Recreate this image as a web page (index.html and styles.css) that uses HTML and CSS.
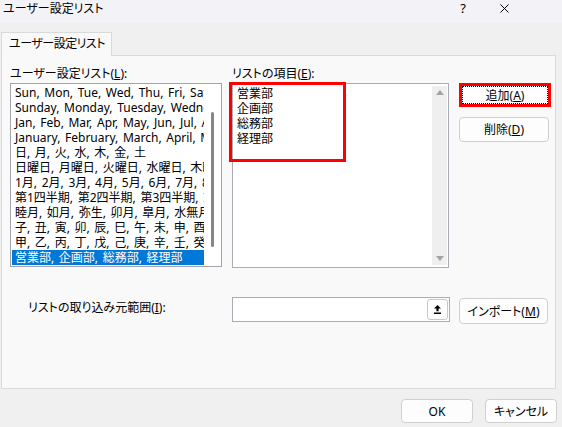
FILE: index.html
```html
<!DOCTYPE html>
<html lang="ja">
<head>
<meta charset="utf-8">
<title>ユーザー設定リスト</title>
<link rel="stylesheet" href="styles.css">
</head>
<body>
<div class="titlebar">
  <span class="title">ユーザー設定リスト</span>
  <span class="help">?</span>
  <svg class="close" viewBox="0 0 9 9" width="9" height="9"><path d="M0.5 0.5 L8.5 8.5 M8.5 0.5 L0.5 8.5" stroke="#000" stroke-width="1" fill="none"/></svg>
</div>
<div class="tabs"><div class="tab">ユーザー設定リスト</div></div>
<div class="panel">
  <div class="top">
    <div class="col-left">
      <div class="label">ユーザー設定リスト(<u>L</u>):</div>
      <div class="listbox">
        <ul class="items">
          <li>Sun, Mon, Tue, Wed, Thu, Fri, Sat</li>
          <li>Sunday, Monday, Tuesday, Wednesday, Thursday</li>
          <li>Jan, Feb, Mar, Apr, May, Jun, Jul, Aug</li>
          <li>January, February, March, April, May</li>
          <li>日, 月, 火, 水, 木, 金, 土</li>
          <li>日曜日, 月曜日, 火曜日, 水曜日, 木曜日</li>
          <li>1月, 2月, 3月, 4月, 5月, 6月, 7月, 8月</li>
          <li>第1四半期, 第2四半期, 第3四半期, 第4四半期</li>
          <li>睦月, 如月, 弥生, 卯月, 皐月, 水無月</li>
          <li>子, 丑, 寅, 卯, 辰, 巳, 午, 未, 申, 酉</li>
          <li>甲, 乙, 丙, 丁, 戊, 己, 庚, 辛, 壬, 癸</li>
          <li class="sel">営業部, 企画部, 総務部, 経理部</li>
        </ul>
        <div class="vscroll"><div class="thumb"></div></div>
      </div>
    </div>
    <div class="col-right">
      <div class="label">リストの項目(<u>E</u>):</div>
      <div class="entries">
        <div class="entry-lines">
          <div>営業部</div>
          <div>企画部</div>
          <div>総務部</div>
          <div>経理部</div>
        </div>
        <div class="sb"><span class="arr-up"></span><span class="arr-down"></span></div>
        <div class="mark"></div>
      </div>
    </div>
    <div class="col-btns">
      <button class="btn btn-add">追加(<u>A</u>)</button>
      <button class="btn btn-del">削除(<u>D</u>)</button>
    </div>
  </div>
  <div class="import-row">
    <div class="import-label">リストの取り込み元範囲(<u>I</u>):</div>
    <div class="import-input">
      <span class="ref-btn"><svg viewBox="0 0 7 9" width="7" height="9"><path d="M3.5 0 L7 3.5 L4.6 3.5 L4.6 6.2 L2.4 6.2 L2.4 3.5 L0 3.5 Z" fill="#000"/><rect x="0" y="7.5" width="7" height="1.5" fill="#000"/></svg></span>
    </div>
    <button class="btn btn-import">インポート(<u>M</u>)</button>
  </div>
</div>
<div class="footer">
  <button class="btn btn-foot">OK</button>
  <button class="btn btn-foot">キャンセル</button>
</div>
</body>
</html>
```
FILE: styles.css
```css
* { box-sizing: border-box; }
body {
  margin: 0;
  width: 562px;
  height: 427px;
  overflow: hidden;
  background: #f0f0f0;
  color: #000;
  font: 12px/15px "Noto Sans", "Noto Sans CJK JP", sans-serif;
}
u { text-underline-offset: 1px; }

.titlebar {
  height: 23px;
  background: #f3f3f7;
  display: flex;
  align-items: flex-start;
  padding-left: 3px;
}
.title {
  flex: 1;
  line-height: 17px;
  font-feature-settings: "palt";
}
.help {
  font-size: 13px;
  line-height: 17px;
  margin-right: 34px;
}
.close {
  margin-top: 4px;
  margin-right: 53px;
}

.tabs {
  display: flex;
  padding: 9px 0 0 1px;
}
.tab {
  position: relative;
  z-index: 1;
  flex: none;
  height: 24px;
  margin-bottom: -1px;
  padding: 0 6px 0 7px;
  border: 1px solid #d9d9d9;
  border-bottom: none;
  background: #f9f9f9;
  line-height: 21px;
  white-space: nowrap;
  letter-spacing: -0.5px;
  font-feature-settings: "palt";
}

.panel {
  margin-left: 1px;
  width: 555px;
  height: 334px;
  border: 1px solid #dadada;
  background: #f9f9f9;
  padding: 10px 0 0 8px;
}
.top { display: flex; }
.label {
  height: 15px;
  margin-bottom: 2px;
  white-space: nowrap;
  font-feature-settings: "palt";
}
.col-left { width: 212px; }
.listbox {
  height: 184px;
  border: 1px solid #a4a4ae;
  background: #fff;
  display: flex;
  padding: 1px 0 0 1px;
}
.items {
  width: 192px;
  flex: none;
  margin: 0;
  padding: 0;
  list-style: none;
  overflow: hidden;
}
.items li {
  height: 15px;
  line-height: 15px;
  padding-left: 3px;
  white-space: nowrap;
  overflow: hidden;
  word-spacing: 1.5px;
}
.items li.sel {
  background: #0078d7;
  color: #fff;
}
.vscroll {
  flex: 1;
  padding: 27px 0 0 7px;
}
.thumb {
  width: 3px;
  height: 135px;
  border-radius: 2px;
  background: #868686;
}

.col-right {
  width: 217px;
  margin-left: 10px;
}
.entries {
  position: relative;
  height: 185px;
  border: 1px solid #acacb4;
  background: #fff;
  display: flex;
}
.entry-lines {
  flex: 1;
  padding: 2px 0 0 4px;
}
.sb {
  width: 15px;
  margin: 2px 1px 2px 0;
  background: #efefef;
  display: flex;
  flex-direction: column;
  justify-content: space-between;
  align-items: center;
  padding: 4px 0;
}
.arr-up, .arr-down {
  width: 0;
  height: 0;
  border-left: 4px solid transparent;
  border-right: 4px solid transparent;
}
.arr-up { border-bottom: 5px solid #a3a3a3; }
.arr-down { border-top: 5px solid #a3a3a3; }
.mark {
  position: absolute;
  left: -4px;
  top: -2px;
  width: 117px;
  height: 80px;
  border: 3px solid #ff0000;
}

.col-btns {
  margin-left: 10px;
  padding-top: 17px;
  display: flex;
  flex-direction: column;
  gap: 10px;
}
.btn {
  font: inherit;
  color: #000;
  height: 25px;
  padding: 0;
  border: 1px solid #d0d0d0;
  border-radius: 4px;
  background: #fdfdfd;
  font-feature-settings: "palt";
  white-space: nowrap;
}
.btn-add {
  width: 92px;
  height: 24px;
  border: 3px solid #ff0000;
  border-radius: 0;
  background: #fff;
  outline: 1px dotted #000;
  outline-offset: -4px;
}
.btn-del { width: 90px; }

.import-row {
  display: flex;
  align-items: flex-start;
  margin-top: 29px;
}
.import-label {
  width: 204px;
  margin: 3px 0 0 18px;
  white-space: nowrap;
  font-feature-settings: "palt";
}
.import-input {
  width: 218px;
  height: 25px;
  border: 1px solid #acacb4;
  background: #fff;
  display: flex;
  justify-content: flex-end;
  padding: 1px;
}
.ref-btn {
  width: 21px;
  height: 21px;
  border: 1px solid #c8c8c8;
  border-radius: 3px;
  background: #fff;
  display: flex;
  align-items: center;
  justify-content: center;
}
.btn-import {
  width: 89px;
  height: 26px;
  margin: 1px 0 0 9px;
}

.footer {
  display: flex;
  justify-content: flex-end;
  gap: 12px;
  padding: 10px 5px 0 0;
}
.btn-foot {
  width: 72px;
  height: 24px;
}
```
